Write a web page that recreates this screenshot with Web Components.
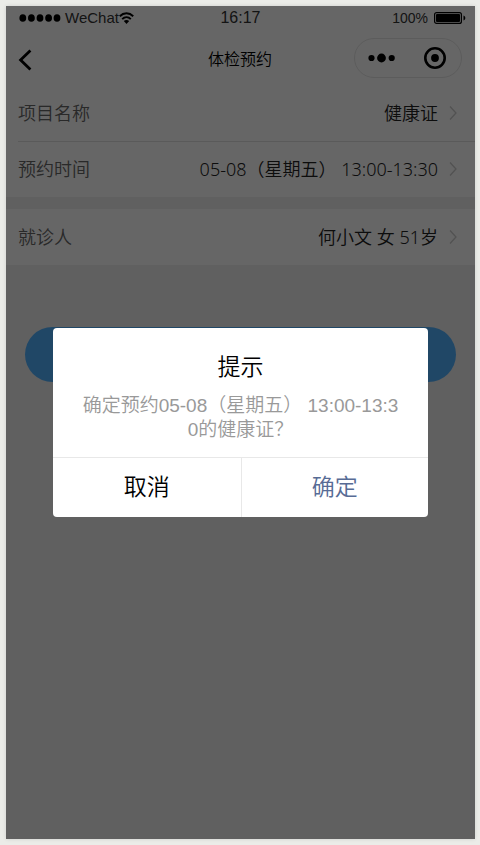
<!DOCTYPE html>
<html lang="zh-CN">
<head>
<meta charset="utf-8">
<meta name="viewport" content="width=device-width, initial-scale=1">
<title>体检预约</title>
<style>
  html, body { height: 100%; }
  body {
    margin: 0;
    padding: 6px 5px 6px 6px;
    box-sizing: border-box;
    background: #ebece8;
    font-family: "Noto Sans", "Noto Sans CJK SC", sans-serif;
    font-weight: 350;
  }
</style>
</head>
<body>
<phone-screen>
  <status-bar carrier="WeChat" time="16:17" battery="100%"></status-bar>
  <nav-bar>体检预约</nav-bar>
  <cell-group>
    <cell-row label="项目名称">健康证</cell-row>
    <cell-row label="预约时间">05-08（星期五） 13:00-13:30</cell-row>
  </cell-group>
  <cell-group>
    <cell-row label="就诊人">何小文 女 51岁</cell-row>
  </cell-group>
  <submit-button></submit-button>
  <confirm-dialog slot="overlay" heading="提示" cancel="取消" confirm="确定">确定预约05-08（星期五） 13:00-13:30的健康证？</confirm-dialog>
</phone-screen>

<script>
  const define = (name, render) => customElements.define(name, class extends HTMLElement {
    constructor() {
      super();
      this.attachShadow({ mode: "open" });
    }
    connectedCallback() {
      this.shadowRoot.innerHTML = render(key => this.getAttribute(key) || "");
    }
  });

  define("phone-screen", () => `
    <style>
      :host { display: block; position: relative; box-sizing: border-box; min-height: 100%;
        background: #f0f0f0; box-shadow: 0 0 4px rgba(0,0,0,.12); }
      .page { display: flex; flex-direction: column; gap: 12px; }
      .overlay { position: absolute; inset: 0; display: grid; place-items: center; background: rgba(0,0,0,.6); }
      ::slotted(status-bar) { margin-bottom: -12px; }
      ::slotted(nav-bar) { margin-bottom: -12px; }
    </style>
    <main class="page"><slot></slot></main>
    <div class="overlay"><slot name="overlay"></slot></div>`);

  define("status-bar", a => `
    <style>
      :host { display: grid; grid-template-columns: 1fr auto 1fr; align-items: center; height: 24px;
        padding: 0 9px 0 13px; background: #fff; color: #333;
        font: 400 15px/24px "Liberation Sans", Arial, sans-serif; }
      .left, .right { display: flex; align-items: center; }
      .right { justify-content: flex-end; gap: 6px; font-size: 14px; }
      .signal { margin-right: 4px; }
      .time { font-size: 16px; padding-right: 4px; }
      svg { display: block; fill: #000; }
    </style>
    <div class="left">
      <svg class="signal" width="42" height="8" viewBox="0 0 42 8" aria-hidden="true">
        <ellipse cx="3.8" cy="4" rx="3.4" ry="3.8"/><ellipse cx="12.4" cy="4" rx="3.4" ry="3.8"/>
        <ellipse cx="21" cy="4" rx="3.4" ry="3.8"/><ellipse cx="29.6" cy="4" rx="3.4" ry="3.8"/>
        <ellipse cx="38" cy="4" rx="3.4" ry="3.8"/>
      </svg>
      <span>${a("carrier")}</span>
      <svg width="15" height="12" viewBox="0 0 15 12" aria-hidden="true">
        <path d="M.8 4.2C4.6.4 10.4.4 14.2 4.2M3.2 7.1c2.5-2.4 6.1-2.4 8.6 0" fill="none" stroke="#000" stroke-width="2"/>
        <path d="M4.8 9c1.6-1.4 3.8-1.4 5.4 0L7.5 11.9z"/>
      </svg>
    </div>
    <span class="time">${a("time")}</span>
    <div class="right">
      <span>${a("battery")}</span>
      <svg width="32" height="12" viewBox="0 0 32 12" aria-hidden="true">
        <rect x=".6" y=".6" width="26.8" height="10.8" rx="2" fill="none" stroke="#000" stroke-width="1.2"/>
        <rect x="2" y="2" width="24" height="8" rx="1"/>
        <path d="M29.5 3.5c2.4.8 2.4 4.2 0 5z"/>
      </svg>
    </div>`);

  define("nav-bar", () => `
    <style>
      :host { display: grid; grid-template-columns: 1fr auto 1fr; align-items: center; height: 55px;
        padding: 0 13px 0 12px; background: #fff; color: #000; }
      h1 { margin: 0; padding-top: 2px; font-size: 16px; font-weight: 350; line-height: 24px; }
      button { border: 0; padding: 0; background: none; display: grid; place-items: center; }
      .back { width: 14px; height: 24px; margin-top: 4px; }
      .capsule { justify-self: end; box-sizing: border-box; width: 108px; height: 40px;
        display: grid; grid-template-columns: 1fr 1fr; border: 1px solid #e6e6e6; border-radius: 20px; }
      svg { display: block; }
    </style>
    <button class="back" aria-label="返回">
      <svg width="14" height="24" viewBox="0 0 14 24"><path d="M12.4 2.6L2.6 12l9.8 9.4" fill="none" stroke="#000" stroke-width="2.8"/></svg>
    </button>
    <h1><slot></slot></h1>
    <div class="capsule">
      <button aria-label="更多">
        <svg width="28" height="10" viewBox="0 0 28 10"><circle cx="3.5" cy="5" r="3.1"/><circle cx="13.5" cy="5" r="4.4"/><circle cx="23.7" cy="5" r="3.1"/></svg>
      </button>
      <button aria-label="关闭">
        <svg width="24" height="24" viewBox="0 0 24 24"><circle cx="12" cy="12" r="9.7" fill="none" stroke="#000" stroke-width="2.6"/><circle cx="12" cy="12" r="3.9"/></svg>
      </button>
    </div>`);

  define("cell-group", () => `
    <style>
      :host { display: block; background: #fff; }
      ::slotted(cell-row:not(:first-child)) { --divider: #e0e0e0; }
    </style>
    <slot></slot>`);

  define("cell-row", a => `
    <style>
      :host { display: block; padding-left: 12px; }
      button { display: flex; align-items: center; width: 100%; height: 56px; padding: 0 16px 1px 0;
        border: 0; border-top: 1px solid var(--divider, transparent); background: none;
        font: inherit; font-size: 18px; line-height: 24px; text-align: left; }
      .label { color: #666; }
      .value { margin-left: auto; margin-right: 9px; color: #222; white-space: nowrap; }
      svg { display: block; }
    </style>
    <button>
      <span class="label">${a("label")}</span>
      <span class="value"><slot></slot></span>
      <svg width="12" height="16" viewBox="0 0 12 16" aria-hidden="true"><path d="M3 1.5L9 8l-6 6.5" fill="none" stroke="#ccc" stroke-width="1.3"/></svg>
    </button>`);

  define("submit-button", () => `
    <style>
      :host { display: block; padding: 50px 19px 0; }
      button { display: block; width: 100%; height: 55px; border: 0; border-radius: 28px; background: #52b1ff; }
    </style>
    <button aria-label="提交预约"></button>`);

  define("confirm-dialog", a => `
    <style>
      :host { display: block; width: 80%; }
      section { background: #fff; border-radius: 4px; overflow: hidden; text-align: center;
        font-family: "Liberation Sans", Arial, "Noto Sans CJK SC", sans-serif; }
      .body { padding: 23px 28px 15px; }
      h2 { margin: 0 0 11px; font-size: 23px; font-weight: 350; line-height: 32px; color: #000; }
      p { margin: 0; font-size: 19px; line-height: 24px; color: #999; word-break: break-all; }
      .actions { display: grid; grid-template-columns: 1fr 1fr; border-top: 1px solid #e8e8e8; }
      button { height: 59px; padding: 0 0 6px; border: 0; background: none; font: inherit; font-size: 23px; color: #000; }
      .confirm { border-left: 1px solid #e8e8e8; color: #576b95; }
    </style>
    <section role="dialog" aria-modal="true" aria-labelledby="title">
      <div class="body">
        <h2 id="title">${a("heading")}</h2>
        <p><slot></slot></p>
      </div>
      <div class="actions">
        <button class="cancel">${a("cancel")}</button>
        <button class="confirm">${a("confirm")}</button>
      </div>
    </section>`);
</script>
</body>
</html>
